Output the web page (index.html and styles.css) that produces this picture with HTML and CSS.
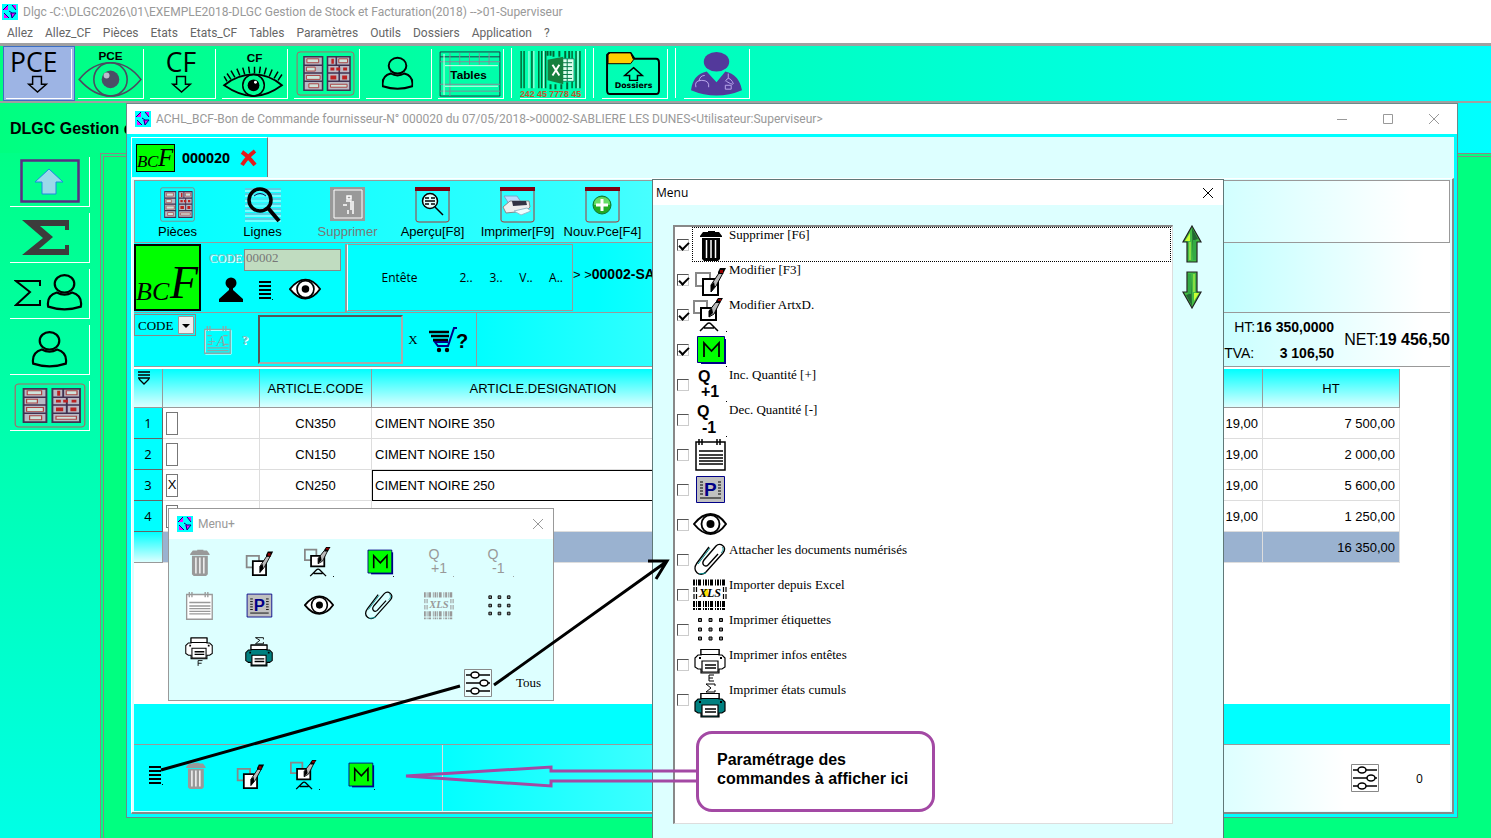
FILE: index.html
```html
<!DOCTYPE html>
<html lang="fr">
<head>
<meta charset="utf-8">
<title>Dlgc - Gestion de Stock et Facturation</title>
<link rel="stylesheet" href="styles.css">
</head>
<body>
<svg class="sprite" aria-hidden="true">
  <symbol id="logo" viewBox="0 0 16 16"><path fill="#0ff" d="M0 0h16v16H0z"/><path fill="#f0f" d="M2 6V5l4-4v5zM10 1h4v5zM2 10l5 4H2zM8 9h5l-3 5z"/><path d="M1 6l5-5M10 1l4 5M2 9l5 5M7 7l3 2h4M9 9l1 5 4-5" stroke="#008" fill="none"/></symbol>
  <symbol id="cabinet" viewBox="0 0 60 46" preserveAspectRatio="none"><rect x="1" y="1" width="58" height="44" rx="3" fill="none" stroke="#a66"/><path fill="#b9b9c4" d="M8 6h19v34H8zM32 6h23v34H32z"/><path d="M8 6h19v34H8zM32 6h23v34H32zM8 14.500h19M8 22.500h19M8 31h19M32 14.500h23M32 22.500h23M32 31h23M41 6v8M44 14v17" fill="none" stroke="#413050" stroke-width="1.600"/><path d="M11 8h12v4H11zM43.500 8h9v4h-9zM10.500 16.500h9v4h-9zM10.500 25h14v4h-14zM13 33.500h10v4H13zM35 34h17v3H35z" fill="#cfe3dc" stroke="#a44"/><path fill="#b22" d="M36 8h2.500v5H36zM35 17h4v3h-4zM41 17h4v3h-4zM48 17h4v3h-4zM35 25h6v4h-6zM47 25h5v4h-5z"/></symbol>
  <symbol id="user" viewBox="0 0 32 34"><ellipse cx="16" cy="9" rx="9" ry="8" fill="none" stroke="#000" stroke-width="2"/><path d="M9 17C2 19 0 24 1 30q15 5 30 0c1-6-1-11-8-13q-7 4-14 0z" fill="none" stroke="#000" stroke-width="2"/></symbol>
  <symbol id="sigma" viewBox="0 0 28 28"><path d="M26 7V2H2l14 11L2 26h24v-5" fill="none" stroke="#000" stroke-width="2"/></symbol>
  <symbol id="trash" viewBox="0 0 34 34"><path fill="currentColor" d="M15 3h7v1h4l3 4v1H7V8l3-4h5zM9 10h18v21l-2 2H11l-2-2z"/><path stroke="#fff" stroke-width="1.500" d="M13.500 12v18M18 12v18M22.500 12v18"/></symbol>
  <symbol id="edit" viewBox="0 0 34 34"><path d="M3 10h14v13H3z" fill="none" stroke="#888" stroke-width="2"/><path d="M10 16h15v16H10z" fill="#fff" stroke="#000" stroke-width="2"/><path d="M18 29V22l8-12h4l-7 13z" fill="#bbb" stroke="#000"/><path d="M18 29v-7l3-3 1 5z"/><path d="M25 9l2-4h6l-3 6h-5z"/><path fill="#900" d="M27 7h3v3h-3z"/></symbol>
  <symbol id="edita" viewBox="0 0 34 34"><path d="M1 3h13v12H1z" fill="none" stroke="#888" stroke-width="2"/><path d="M8 10h15v12H8z" fill="#fff" stroke="#000" stroke-width="2"/><path d="M16 19v-6l7-9h4l-6 12z" fill="#bbb" stroke="#000"/><path d="M16 19v-6l3-3 1 5z"/><path d="M23 3l2-3h5l-3 5h-4z"/><path fill="#900" d="M25 1h3v2h-3z"/><path d="M7 33l7-7q2-2 4 0l7 7M11 30h10" fill="none" stroke="#000" stroke-width="1.500"/><path d="M33 33h1v1h-1z"/></symbol>
  <symbol id="mark" viewBox="0 0 34 34"><path fill="#008" d="M8 6h25v25H8z"/><path fill="#0f0" stroke="#008" d="M4.500 3.500h27v26h-27z"/><path d="M11 24V10l7.500 8 7.500-8v14" fill="none" stroke="#000" stroke-width="1.800"/><path d="M33 33h1v1h-1z"/></symbol>
  <symbol id="qplus" viewBox="0 0 34 34"><text x="5" y="14" class="qtext">Q</text><text x="8" y="29" class="qtext">+1</text><path fill="currentColor" d="M33 33h1v1h-1z"/></symbol>
  <symbol id="qminus" viewBox="0 0 34 34"><text x="4" y="14" class="qtext">Q</text><text x="9" y="30" class="qtext">-1</text><path fill="currentColor" d="M33 33h1v1h-1z"/></symbol>
  <symbol id="notepad" viewBox="0 0 34 34"><path fill="#fff" stroke="currentColor" stroke-width="1.500" d="M3 4h29v28H3z"/><path d="M6 13h24M6 17h24M6 20h24M6 23h24M6 26h24M6 1v6M9 1v6M24 1v6M27 1v6" stroke="currentColor" stroke-width="1.500"/></symbol>
  <symbol id="pbox" viewBox="0 0 34 34"><path fill="#c0c0c0" stroke="#008" d="M3.500 3.500h28v26h-28z"/><path d="M7 9h3M7 12h3M7 15h3M7 18h3M7 21h3M25 9h3M25 12h3M25 15h3M25 18h3M25 21h3M7 25h21" stroke="#000"/><text x="11" y="23" font-family="Liberation Sans" font-weight="bold" font-size="19" fill="#008">P</text></symbol>
  <symbol id="eye" viewBox="0 0 34 34"><path d="M1 16Q9 6 17.500 6T33 16Q26 26 17.500 26T1 16z" fill="#fff" stroke="#000" stroke-width="2"/><circle cx="17.500" cy="16" r="9" fill="#fff" stroke="#000" stroke-width="1.800"/><circle cx="17.500" cy="16" r="4"/></symbol>
  <symbol id="clip" viewBox="0 0 34 34"><path d="M16 4L4 20c-6 8 3 15 9 9L30 10c5-6-3-11-7-7L11 17c-3 4 1 8 4 5l10-11" fill="none" stroke="#000" stroke-width="1.400"/><path d="M17 5L5 21M29 4c2 2 1 4-1 6M13 30L6 31" fill="none" stroke="#088"/></symbol>
  <symbol id="xls" viewBox="0 0 34 34"><path d="M0 4.500h34M0 26h34" stroke="currentColor" stroke-width="6" stroke-dasharray="2 1 1 1 3 2 1 1"/><path d="M0 31h34" stroke="currentColor" stroke-width="2" stroke-dasharray="2 1 1 1 3 2 1 1"/><path d="M1 9v5M1 16v5M3.500 9v5M3.500 16v5M30.500 9v5M30.500 16v5M33 9v5M33 16v5" stroke="currentColor" stroke-width="1.200"/><path class="gold" d="M11 11h4v7h-4z"/><text x="6" y="19" font-family="Liberation Serif" font-style="italic" font-weight="bold" font-size="12" fill="currentColor">XLS</text></symbol>
  <symbol id="dots" viewBox="0 0 34 34"><path fill="#888" stroke="#000" d="M5.500 5.500h3v3h-3zM16 5.500h3v3h-3zM26.500 5.500h3v3h-3zM5.500 15h3v3h-3zM16 15h3v3h-3zM26.500 15h3v3h-3zM5.500 24h3v3h-3zM16 24h3v3h-3zM26.500 24h3v3h-3z"/></symbol>
  <symbol id="printer" viewBox="0 0 34 34"><path class="printer-body" d="M8 7V1.500h18V7h3l3 3v9l-3 2h-3v4H8v-4H5l-3-2v-9l3-3z" stroke="#000" stroke-width="1.200"/><path d="M8 6.500V1.500h18v5zM9 24V13h16v11z" fill="#fff" stroke="#000" stroke-width="1.200"/><path d="M12 17h11M12 20h11" stroke="#000" stroke-width="1.500"/><path d="M6 9h2v2H6zM27 9h2v2h-2z"/></symbol>
  <symbol id="sliders" viewBox="0 0 28 28"><path fill="#fff" fill-opacity=".5" stroke="#888" d="M.5.500h27v27H.5z"/><path d="M2 6h24M2 14h24M2 22h24" stroke="#000" stroke-width="1.700"/><g fill="#fff" stroke="#000" stroke-width="1.500"><ellipse cx="11" cy="6" rx="4" ry="3"/><ellipse cx="20" cy="14" rx="4" ry="3"/><ellipse cx="11" cy="22" rx="4" ry="3"/></g></symbol>
  <symbol id="lines" viewBox="0 0 14 20"><path d="M0 2h12M0 6h12M0 10h12M0 14h12M0 18h12" stroke="#000" stroke-width="2"/><path d="M13 19h1v1h-1z"/></symbol>
  <symbol id="cross" viewBox="0 0 12 12"><path d="M1 1l10 10M11 1L1 11" fill="none" stroke="currentColor"/></symbol>
  <symbol id="arrow" viewBox="0 0 20 38"><path d="M10 1l9 16h-4v20H5V17H1z" fill="#4b4" stroke="#222" stroke-width="1.200"/><path d="M10 3l6 11-3 1v20h-2z" fill="#263"/><path d="M11 15h3v20h-3z" fill="#3a4"/><path d="M7 17h2v18H7z" fill="#8d4"/><path d="M3 16l5-8v8z" fill="#cf3"/></symbol>
</svg>

<div class="app">
  <header class="app-title"><svg class="logo"><use href="#logo"/></svg><span>Dlgc -C:\DLGC2026\01\EXEMPLE2018-DLGC Gestion de Stock et Facturation(2018) --&gt;01-Superviseur</span></header>
  <nav class="menubar">
    <a href="#">Allez</a><a href="#">Allez_CF</a><a href="#">Pièces</a><a href="#">Etats</a><a href="#">Etats_CF</a><a href="#">Tables</a><a href="#">Paramètres</a><a href="#">Outils</a><a href="#">Dossiers</a><a href="#">Application</a><a href="#">?</a>
  </nav>

  <div class="toolbar">
    <button class="tool tool-active" aria-label="PCE"><svg viewBox="0 0 66 50"><text x="4" y="23" class="big">PCE</text><path class="hollow" d="M27 28h9v8h5l-9 8-9-8h4z"/></svg></button>
    <button class="tool" aria-label="Voir PCE"><svg viewBox="0 0 66 50"><text x="33" y="11" text-anchor="middle" class="small">PCE</text><path d="M1 31Q15 14 33 14T64 31Q50 48 33 48T1 31z" fill="none" stroke="#4b4b60" stroke-width="1.600"/><circle cx="33" cy="31" r="17" fill="none" stroke="#4b4b60" stroke-width="1.600"/><circle cx="33" cy="31" r="9" fill="#4b4f66"/><circle cx="29" cy="27" r="3" fill="#bbc"/></svg></button>
    <button class="tool" aria-label="CF"><svg viewBox="0 0 66 50"><text x="16" y="23" class="big">CF</text><path class="hollow" d="M27 28h9v8h5l-9 8-9-8h4z"/></svg></button>
    <button class="tool" aria-label="Voir CF"><svg viewBox="0 0 66 50"><text x="33" y="13" text-anchor="middle" class="small">CF</text><path d="M2 37Q16 26 32 26T61 37Q46 48 32 48T2 37z" fill="none" stroke="#000" stroke-width="1.800"/><circle cx="32" cy="37" r="11" fill="none" stroke="#000" stroke-width="1.500"/><circle cx="32" cy="37" r="6"/><circle cx="34" cy="34" r="1.500" fill="#fff"/><path d="M5 33l-3-5M9 31l-4-6M13 29l-4-7M18 27l-3-7M23 26l-2-7M28 25l-1-7M33 25v-7M38 25l1-7M43 26l2-7M48 28l3-7M53 30l4-7M57 32l4-6" stroke="#000" stroke-width="1.500"/></svg></button>
    <button class="tool" aria-label="Pièces"><svg viewBox="0 0 66 50"><use href="#cabinet" x="2" y="2" width="60" height="46"/></svg></button>
    <button class="tool" aria-label="Tiers"><svg viewBox="0 0 66 50"><use href="#user" x="16" y="7" width="32" height="36"/></svg></button>
    <button class="tool" aria-label="Tables"><svg viewBox="0 0 66 50"><path d="M2 3h61v45H2zM2 8h61" fill="none" stroke="#234"/><path d="M2 13h61M2 36h61M2 43h61M12 4v44M22 4v12M32 4v12M42 4v12M52 4v12" stroke="#889"/><path d="M7 17h54M7 38h54M6 5v42" stroke="#dfe"/><text x="31" y="31" text-anchor="middle" class="small">Tables</text></svg></button>
    <span class="tool-sep"></span>
    <button class="tool" aria-label="Codes"><svg viewBox="0 0 66 50"><path d="M1 2v38M4 2v38M12 2v38M19 2v38M22 2v38M26 2v38M53 2v38M57 2v38M61 2v38" stroke="#063" stroke-width="1.500"/><path d="M9 2v38M14 2v38M24 2v38M59 2v38" stroke="#dfe"/><path d="M28 2v5M31 2v5M34 2v6M40 2v6M46 2v8M50 2v8M31 36v5M36 36v5M42 36v5M48 34v7" stroke="#063" stroke-width="2"/><path d="M42 10h13v23H42z" fill="#dfe" stroke="#096"/><path d="M43 14h10M43 18h10M43 22h10M43 26h10M43 30h10M48 10v23" stroke="#074"/><path fill="#16803f" d="M28 11l16-3v28l-16-4z"/><path d="M33 16l7 11M40 16l-7 11" stroke="#fff" stroke-width="2"/><text x="31" y="49" text-anchor="middle" class="digits">242 45 7778 45</text></svg></button>
    <span class="tool-sep"></span>
    <button class="tool" aria-label="Dossiers"><svg viewBox="0 0 66 50"><path d="M5 14V6l2-2h22l4 6h22q3 0 3 4v28q0 4-3 4H8q-3 0-3-4z" fill="none" stroke="#000" stroke-width="2"/><path d="M6 14V6l2-2h21l3 7-3 4H6z" fill="#fc0" stroke="#000"/><path class="hollow" d="M32 19l9 8h-5v5h-8v-5h-5z"/><text x="32" y="40" text-anchor="middle" class="tiny">Dossiers</text></svg></button>
    <span class="tool-sep"></span>
    <button class="tool" aria-label="Utilisateur"><svg viewBox="0 0 66 50"><ellipse cx="33" cy="13" rx="13" ry="10" fill="#53399b"/><path d="M7 42q2-16 16-19l10 11 9-11q14 3 17 19-26 11-52 0z" fill="#53399b"/><path d="M12 39q-2-7 6-7t7 7M15 33q1-6 6-6M45 25v5M42 33q3-6 7 0t-6 0M42 37h6v4h-6z" fill="none" stroke="#b9a8ec"/></svg></button>
  </div>

  <main class="desktop">
    <div class="desktop-band">DLGC Gestion de</div>
    <div class="desktop-row">
      <aside class="sidebar">
        <button class="side" aria-label="Remonter"><svg viewBox="0 0 72 45"><path d="M7.500 1.500h57v41h-57z" fill="none" stroke="#5b2c83" stroke-width="2.500"/><path d="M35 10l14 13h-7v12H28V23h-7z" fill="#9bd9ea" stroke="#1a8ae0"/></svg></button>
        <button class="side" aria-label="Cumuls"><svg viewBox="0 0 72 45"><path fill="#3c3c3c" d="M8 5h47v10h-4v-4H26l13 11-14 12h26v-4h4v10H8l21-17z"/></svg></button>
        <button class="side" aria-label="Cumuls tiers"><svg viewBox="0 0 72 45"><use href="#sigma" x="0" y="8" width="28" height="28"/><use href="#user" x="32" y="3" width="37" height="37"/></svg></button>
        <button class="side" aria-label="Tiers"><svg viewBox="0 0 72 45"><use href="#user" x="17" y="4" width="37" height="37"/></svg></button>
        <button class="side" aria-label="Pièces"><svg viewBox="0 0 72 45"><use href="#cabinet" width="72" height="45"/></svg></button>
      </aside>
      <div class="workspace"></div>
    </div>

    <section class="window order">
      <header class="window-title"><svg class="logo"><use href="#logo"/></svg><h1>ACHL_BCF-Bon de Commande fournisseur-N° 000020 du 07/05/2018-&gt;00002-SABLIERE LES DUNES&lt;Utilisateur:Superviseur&gt;</h1>
        <div class="window-buttons">
          <button aria-label="Réduire"><svg viewBox="0 0 12 12"><path d="M1 6.500h10" stroke="currentColor"/></svg></button>
          <button aria-label="Agrandir"><svg viewBox="0 0 12 12"><path d="M1.500 1.500h9v9h-9z" fill="none" stroke="currentColor"/></svg></button>
          <button aria-label="Fermer"><svg><use href="#cross"/></svg></button>
        </div>
      </header>
      <div class="order-body">
        <div class="tabs">
          <button class="tab"><svg class="bcf-small" viewBox="0 0 39 28"><rect x=".5" y=".5" width="38" height="27" fill="#0f0" stroke="#000"/><text x="1" y="23" class="bcf bcf-s">B</text><text x="11" y="23" class="bcf bcf-s">C</text><text x="22" y="22" class="bcf bcf-m">F</text></svg><span>000020</span><svg class="tab-x" viewBox="0 0 18 18"><path d="M2 3q6 4 13 13M15 2Q7 8 2 16" fill="none" stroke="#e21b1b" stroke-width="4"/></svg></button>
        </div>
        <div class="pane">
          <div class="actions">
            <button class="action"><svg viewBox="0 0 36 36"><use href="#cabinet" width="35" height="35"/></svg>Pièces</button>
            <button class="action"><svg viewBox="0 0 36 36"><path d="M0 2h36M0 7h36M0 12h36M0 17h36M0 22h36M0 27h36M0 32h36" stroke="#a39bc8"/><path d="M0 4h36M0 9h36M0 14h36M0 19h36M0 24h36M0 29h36M0 34h36" stroke="#dff"/><circle cx="15" cy="13" r="11" fill="#3ff" fill-opacity=".5" stroke="#000" stroke-width="3.500"/><path d="M9 9q6-5 12 0" fill="none" stroke="#115"/><path d="M23 21l11 13" stroke="#000" stroke-width="4"/></svg>Lignes</button>
            <button class="action" disabled><svg viewBox="0 0 36 36"><path fill="#999" d="M0 0h35v34H0z"/><path d="M4 3h28v28H4z" fill="none" stroke="#fff"/><path d="M17 9h4v3h-4zM16 14h5v9M18 23v4M23 23v4M23 14v9M13 18h4" fill="none" stroke="#fff" stroke-width="1.500"/></svg>Supprimer</button>
            <button class="action"><svg viewBox="0 0 36 36"><path d="M1 1h33v32q0 2-3 2H4q-3 0-3-2z" fill="none" stroke="#a33"/><path fill="#800010" d="M0 0h35v4H0z"/><circle cx="15" cy="14" r="7.500" fill="#dff" stroke="#000" stroke-width="1.500"/><path d="M10 11h4M16 11h4M10 14h10M10 17h4M16 17h4M20 20l8 8" stroke="#000" stroke-width="1.500"/></svg>Aperçu[F8]</button>
            <button class="action"><svg viewBox="0 0 36 36"><path d="M1 1h33v32q0 2-3 2H4q-3 0-3-2z" fill="none" stroke="#a33"/><path fill="#800010" d="M0 0h35v4H0z"/><path fill="#bdf" stroke="#7ac" d="M4 9h13l4 6-12 2z"/><path fill="#eee" stroke="#888" d="M3 20l7-6h19l1 6-4 4-20 2z"/><path fill="#334" d="M12 14h14l1 4-14 1z"/><path fill="#eff" stroke="#9bc" d="M14 24l13-3 4 3-10 4z"/></svg>Imprimer[F9]</button>
            <button class="action"><svg viewBox="0 0 36 36"><path d="M1 1h33v32q0 2-3 2H4q-3 0-3-2z" fill="none" stroke="#a33"/><path fill="#800010" d="M0 0h35v4H0z"/><circle cx="17" cy="18" r="9" fill="#2a2" stroke="#173"/><path d="M9 18q0-8 8-8t8 8z" fill="#6d6"/><path d="M17 12v12M11 18h12" stroke="#fff" stroke-width="3"/></svg>Nouv.Pce[F4]</button>
          </div>

          <div class="client">
            <svg class="bcf-big" viewBox="0 0 67 67"><rect x="1" y="1" width="65" height="65" fill="#0f0" stroke="#000" stroke-width="2"/><text x="2" y="56" class="bcf">B</text><text x="18" y="56" class="bcf">C</text><text x="36" y="54" class="bcf bcf-l">F</text></svg>
            <div class="client-code">
              <div class="code-line"><label for="code">CODE:</label><input id="code" value="00002" disabled></div>
              <div class="code-icons"><svg width="24" height="26" viewBox="0 0 24 26"><circle cx="12" cy="6" r="5.500"/><path d="M10 10h4v3l10 9v3H0v-3l10-9z"/></svg><svg width="14" height="20"><use href="#lines"/></svg><svg width="32" height="32"><use href="#eye"/></svg></div>
            </div>
            <div class="client-tabs"><button class="wide">Entête</button><button>2..</button><button>3..</button><button>V..</button><button>A..</button></div>
            <div class="client-name">&gt; &gt;<b>00002-SABLIERE</b></div>
          </div>

          <div class="search">
            <div class="picker"><select aria-label="Critère"><option>CODE</option></select><svg viewBox="0 0 16 18"><path fill="#eee" stroke="#999" d="M.5.500h15v17H.5z"/><path d="M4 8h8l-4 4z"/></svg></div>
            <svg class="note" viewBox="0 0 34 34"><path fill="none" stroke="#fff" d="M4 6h29v27H4z"/><path fill="none" stroke="currentColor" stroke-width="1.500" d="M3 5h29v27H3zM6 1v6M9 1v6M24 1v6M27 1v6M6 12h5M24 12h5M6 26h24M6 29h24M6 22h5M25 22h5"/><text x="6" y="24" font-family="Liberation Serif" font-style="italic" font-size="16" fill="currentColor">+A</text></svg>
            <span class="hint">?</span>
            <input class="query" aria-label="Recherche">
            <button class="clear">X</button>
            <button class="cart" aria-label="Panier"><svg viewBox="0 0 40 28"><path d="M0 6h20M2 10h18M4 14h15" fill="none" stroke="#000" stroke-width="2.500"/><path d="M28 2h-3l-6 18H9l-3-4h13" fill="none" stroke="#008" stroke-width="2"/><circle cx="10" cy="24" r="2.200"/><circle cx="18" cy="24" r="2.200"/><text x="27" y="22" font-family="Liberation Sans" font-weight="bold" font-size="20">?</text></svg></button>
            <div class="totals">
              <dl class="sub"><dt class="ht">HT:</dt><dd>16 350,0000</dd><dt>TVA:</dt><dd>3 106,50</dd></dl>
              <div class="net">NET:<b>19 456,50</b></div>
            </div>
          </div>

          <div class="grid-area">
            <table class="lines">
              <colgroup><col class="c-num"><col class="c-sel"><col class="c-code"><col class="c-name"><col><col class="c-tva"><col class="c-ht"></colgroup>
              <thead><tr><th class="corner"><svg viewBox="0 0 12 14"><path d="M0 1h12M0 4h12M0 7h12M1 8l5 5 5-5" fill="none" stroke="#000" stroke-width="1.300"/></svg></th><th></th><th>ARTICLE.CODE</th><th>ARTICLE.DESIGNATION</th><th></th><th></th><th>HT</th></tr></thead>
              <tbody>
                <tr><th>1</th><td><input type="checkbox" class="pick" aria-label="Ligne 1"></td><td class="mid">CN350</td><td>CIMENT NOIRE 350</td><td></td><td class="num">19,00</td><td class="num">7 500,00</td></tr>
                <tr><th>2</th><td><input type="checkbox" class="pick" aria-label="Ligne 2"></td><td class="mid">CN150</td><td>CIMENT NOIRE 150</td><td></td><td class="num">19,00</td><td class="num">2 000,00</td></tr>
                <tr><th>3</th><td><input type="checkbox" class="pick" aria-label="Ligne 3" checked></td><td class="mid">CN250</td><td class="current">CIMENT NOIRE 250</td><td></td><td class="num">19,00</td><td class="num">5 600,00</td></tr>
                <tr><th>4</th><td><input type="checkbox" class="pick" aria-label="Ligne 4"></td><td></td><td></td><td></td><td class="num">19,00</td><td class="num">1 250,00</td></tr>
              </tbody>
              <tfoot><tr><th></th><td></td><td></td><td></td><td></td><td></td><td class="num">16 350,00</td></tr></tfoot>
            </table>
          </div>
          <div class="strip"></div>
          <footer class="commands">
            <div class="command-list">
              <button aria-label="Menu+"><svg class="lines-icon"><use href="#lines"/></svg></button>
              <button aria-label="Supprimer" disabled><svg><use href="#trash"/></svg></button>
              <button aria-label="Modifier"><svg><use href="#edit"/></svg></button>
              <button aria-label="Modifier ArtxD."><svg><use href="#edita"/></svg></button>
              <button aria-label="M"><svg><use href="#mark"/></svg></button>
            </div>
            <button class="settings" aria-label="Paramétrage"><svg><use href="#sliders"/></svg></button>
            <span class="count">0</span>
          </footer>
        </div>
      </div>
    </section>

    <section class="window extra">
      <header class="window-title"><svg class="logo"><use href="#logo"/></svg><h2>Menu+</h2><button class="close" aria-label="Fermer"><svg><use href="#cross"/></svg></button></header>
      <div class="extra-grid">
        <button aria-label="Supprimer" disabled><svg><use href="#trash"/></svg></button>
        <button aria-label="Modifier"><svg><use href="#edit"/></svg></button>
        <button aria-label="Modifier ArtxD."><svg><use href="#edita"/></svg></button>
        <button aria-label="M"><svg><use href="#mark"/></svg></button>
        <button aria-label="Inc. Quantité" disabled><svg><use href="#qplus"/></svg></button>
        <button aria-label="Dec. Quantité" disabled><svg><use href="#qminus"/></svg></button>
        <button aria-label="Notes" disabled><svg><use href="#notepad"/></svg></button>
        <button aria-label="P"><svg><use href="#pbox"/></svg></button>
        <button aria-label="Voir"><svg><use href="#eye"/></svg></button>
        <button aria-label="Attacher"><svg><use href="#clip"/></svg></button>
        <button aria-label="Importer" disabled><svg><use href="#xls"/></svg></button>
        <button aria-label="Etiquettes"><svg><use href="#dots"/></svg></button>
        <button aria-label="Infos entêtes"><svg viewBox="0 0 34 34"><use href="#printer" y="2" width="34" height="34"/><path d="M21 29h-5v6M16 32h4" fill="none" stroke="#000"/></svg></button>
        <button aria-label="Etats cumuls" class="teal"><svg viewBox="0 0 34 34"><path d="M22 5V3h-9l5 3-5 4h9V8" fill="none" stroke="#000"/><use href="#printer" y="10" width="34" height="34"/></svg></button>
      </div>
      <div class="extra-foot"><button aria-label="Paramétrage"><svg><use href="#sliders"/></svg></button><span>Tous</span></div>
    </section>

    <section class="window menu">
      <header class="window-title"><h2>Menu</h2><button class="close" aria-label="Fermer"><svg><use href="#cross"/></svg></button></header>
      <div class="menu-body">
        <ul class="menu-list">
          <li><label class="focused"><input type="checkbox" checked><span><svg><use href="#trash"/></svg>Supprimer [F6]</span></label></li>
          <li><label><input type="checkbox" checked><span><svg><use href="#edit"/></svg>Modifier [F3]</span></label></li>
          <li><label><input type="checkbox" checked><span><svg><use href="#edita"/></svg>Modifier ArtxD.</span></label></li>
          <li><label><input type="checkbox" checked aria-label="M"><span><svg><use href="#mark"/></svg></span></label></li>
          <li><label><input type="checkbox"><span><svg><use href="#qplus"/></svg>Inc. Quantité [+]</span></label></li>
          <li><label><input type="checkbox"><span><svg><use href="#qminus"/></svg>Dec. Quantité [-]</span></label></li>
          <li><label><input type="checkbox" aria-label="Notes"><span><svg><use href="#notepad"/></svg></span></label></li>
          <li><label><input type="checkbox" aria-label="P"><span><svg><use href="#pbox"/></svg></span></label></li>
          <li><label><input type="checkbox" aria-label="Voir"><span><svg><use href="#eye"/></svg></span></label></li>
          <li><label><input type="checkbox"><span><svg><use href="#clip"/></svg>Attacher les documents numérisés</span></label></li>
          <li><label><input type="checkbox"><span><svg><use href="#xls"/></svg>Importer depuis Excel</span></label></li>
          <li><label><input type="checkbox"><span><svg><use href="#dots"/></svg>Imprimer étiquettes</span></label></li>
          <li><label><input type="checkbox"><span><svg viewBox="0 0 34 34"><use href="#printer" width="34" height="34"/><path d="M21 27h-5v6h5M16 30h4" fill="none" stroke="#000"/></svg>Imprimer infos entêtes</span></label></li>
          <li><label><input type="checkbox"><span class="teal"><svg viewBox="0 0 34 34"><path d="M22 3V1h-9l5 4-5 4h9V7" fill="none" stroke="#000"/><use href="#printer" y="9" width="34" height="34"/></svg>Imprimer états cumuls</span></label></li>
        </ul>
        <div class="movers"><button aria-label="Monter"><svg><use href="#arrow"/></svg></button><button aria-label="Descendre" class="down"><svg><use href="#arrow"/></svg></button></div>
      </div>
    </section>

    <svg class="pointers" width="720" height="735" viewBox="0 103 720 735" aria-hidden="true">
      <path d="M161 770L460 686M494 685L666 562M648 561l19 0-11 18" fill="none" stroke="#000" stroke-width="3"/>
      <path d="M698 771H551v-4L406 776l145 10v-5h147" fill="none" stroke="#a349a4" stroke-width="3"/>
    </svg>
    <p class="callout">Paramétrage des commandes à afficher ici</p>
  </main>
</div>
</body>
</html>
```
FILE: styles.css
```css
* { box-sizing: border-box; }
html, body { height: 100%; }
body { margin: 0; font-family: "Liberation Sans", Arial, sans-serif; font-size: 13px; color: #000; overflow: hidden; }
button, input, select { font: inherit; color: inherit; margin: 0; }
button { padding: 0; border: 0; background: none; }
h1, h2, p, ul, dl, dd { margin: 0; padding: 0; font-size: inherit; font-weight: normal; }
ul { list-style: none; }
svg { display: block; overflow: visible; }
.sprite { display: none; }
.logo { width: 16px; height: 16px; flex: none; }
.gold { fill: var(--gold, #fd0); }
.qtext { font-family: "Liberation Sans", sans-serif; font-size: 16px; font-weight: var(--q-weight, bold); fill: currentColor; }
.printer-body { fill: var(--body, #fff); }
.teal { --body: #008080; }
button:disabled { color: #999; --gold: transparent; --q-weight: normal; }

.app { display: flex; flex-direction: column; height: 100%; }
.app-title { display: flex; align-items: center; gap: 5px; height: 24px; padding: 0 2px; color: #999; background: #fff; font: 12px/24px Roboto, sans-serif; white-space: nowrap; }
.menubar { display: flex; gap: 12px; height: 19px; padding: 0 7px; background: #fff; font: 12px/18px Roboto, sans-serif; }
.menubar a { color: #666; text-decoration: none; }

.toolbar { display: flex; flex: none; height: 60px; padding: 0 3px; border-top: 3px solid #a0a0a0; border-bottom: 2px solid #a0a0a0; background: linear-gradient(90deg, #00ff80, #00ffff); }
.tool { width: 72px; height: 55px; padding: 2px 3px; border: 0; }
.tool svg { width: 66px; height: 50px; border-right: 1px solid #fff; border-bottom: 1px solid #fff; }
.tool-active { background: #9db4e4; border: 1px solid #3c6fc4; padding: 1px 2px; }
.tool-sep { width: 10px; background: linear-gradient(#fff, #fff) 4px 2px / 1px 50px no-repeat; }
.big { font: 27px "Open Sans", sans-serif; }
.small { font: bold 12px "Liberation Sans", sans-serif; }
.tiny { font: bold 8px "DejaVu Sans", sans-serif; }
.digits { font: bold 9px "Liberation Sans", sans-serif; fill: #c0562e; }
.hollow { fill: none; stroke: #000; stroke-width: 1.5; }

.desktop { position: relative; flex: 1; display: flex; flex-direction: column; overflow: hidden; background: linear-gradient(#00ff80, #00ffe6); }
.desktop-band { flex: none; height: 50px; padding-left: 10px; background: linear-gradient(90deg, #00ff80, #00ffff); font-size: 16px; font-weight: bold; line-height: 52px; }
.desktop-row { display: flex; flex: 1; }
.sidebar { display: flex; flex-direction: column; gap: 6px; width: 100px; padding: 4px 0 0 10px; }
.side { display: flex; align-items: center; justify-content: center; width: 80px; height: 50px; border-right: 1px solid #fff; border-bottom: 1px solid #fff; }
.side svg { width: 72px; height: 45px; }
.workspace { flex: 1; border: 4px double #888; border-width: 4px 0 0 4px; background: #00ff80; }

.window { position: absolute; display: flex; flex-direction: column; border: 1px solid #6b8a8a; background: #ddffff; }
.window-title { display: flex; align-items: center; flex: none; background: #fff; color: #999; font: 12px/16px Roboto, sans-serif; }
.window-title svg:not(.logo) { width: 12px; height: 12px; }
.close { margin-left: auto; padding: 4px; }

.order { top: 0; right: 33px; bottom: 20px; left: 126px; }
.order > .window-title { height: 30px; padding: 0 17px 0 8px; gap: 5px; white-space: nowrap; }
.window-buttons { display: flex; gap: 34px; margin-left: auto; }
.order-body { flex: 1; display: flex; flex-direction: column; min-height: 0; padding: 3px 3px 3px 4px; background: #00ffff; }
.tabs { flex: none; height: 41px; background: #ddffff; }
.tab { display: flex; align-items: center; gap: 7px; width: 137px; height: 40px; padding-left: 4px; background: #00ffff; border: 1px solid #fff; border-right-color: #777; border-bottom: 0; font: bold 14px "Open Sans", sans-serif; }
.bcf-small { flex: none; width: 39px; height: 28px; }
.tab-x { flex: none; width: 18px; height: 18px; margin-left: 3px; }
.bcf { font: italic 26px "Liberation Serif", serif; }
.bcf-s { font-size: 17px; }
.bcf-m { font-size: 25px; }
.bcf-l { font-size: 46px; }

.pane { flex: 1; display: flex; flex-direction: column; min-height: 0; padding: 1px 2px; background: #ddffff; border: 1px solid #fff; border-right: 2px solid #888; border-bottom: 2px solid #888; }
.actions { flex: none; display: flex; height: 63px; padding-top: 6px; border: 1px solid #999; background: linear-gradient(90deg, #00ffff, #33ffff 33%, #ffffff 97%); }
.action { display: flex; flex-direction: column; align-items: center; gap: 1px; flex: none; width: 85px; line-height: 16px; white-space: nowrap; }
.action svg { width: 36px; height: 36px; }
.action:disabled { color: #777; }

.client { flex: none; display: flex; height: 70px; padding-top: 1px; border-bottom: 1px solid #999; background: linear-gradient(90deg, #00ffff 35%, #ffffff 98%); }
.bcf-big { flex: none; width: 67px; height: 67px; }
.client-code { flex: none; width: 146px; padding: 5px 5px 0 8px; border-right: 2px solid #999; font-family: "Liberation Serif", serif; }
.code-line { display: flex; }
.code-line label { flex: none; width: 35px; line-height: 18px; font-size: 12px; color: #7fbcbc; text-shadow: 1px 1px #fff; white-space: nowrap; }
.code-line input { width: 97px; height: 22px; padding: 0 1px 4px; border: 1px solid #888; background: #c0dcc0; color: #777; }
.code-icons { display: flex; align-items: center; gap: 16px; height: 38px; padding-left: 10px; }
.client-tabs { flex: none; display: flex; align-items: center; width: 226px; height: 67px; border: 1px solid #999; border-left-color: #fff; font: 12px "Open Sans", sans-serif; }
.client-tabs button { width: 30px; height: 30px; }
.client-tabs .wide { width: 103px; }
.client-name { line-height: 60px; white-space: nowrap; }
.client-name b { font-size: 14px; }

.search { flex: none; display: flex; align-items: center; height: 54px; border-bottom: 1px solid #999; background: linear-gradient(90deg, #00ffff 26%, #ffffff 98%); font-family: "Liberation Serif", serif; }
.picker { align-self: flex-start; display: flex; align-items: center; width: 62px; height: 22px; margin-top: 1px; padding: 1px; border: 1px solid #888; }
.picker select { flex: 1; min-width: 0; padding: 0 2px; border: 0; background: none; appearance: none; }
.picker svg { width: 16px; height: 18px; }
.note { width: 30px; height: 30px; margin-left: 6px; color: #8aa8a8; }
.hint { width: 26px; text-align: center; color: #7fbcbc; text-shadow: 1px 1px #fff; font-weight: bold; }
.query { width: 145px; height: 49px; border: 2px inset #aaa; background: #00ffff; }
.clear { width: 20px; }
.cart { width: 54px; height: 53px; border-right: 1px solid #999; }
.cart svg { width: 40px; height: 28px; margin-left: 6px; }
.totals { display: flex; align-items: center; gap: 10px; margin-left: auto; font-family: "Liberation Sans", sans-serif; white-space: nowrap; }
.sub { display: grid; grid-template-columns: 31px 79px; row-gap: 10px; font-size: 14px; line-height: 16px; text-align: right; }
.sub dd { font-weight: bold; }
.sub dt { text-align: left; }
.sub .ht { text-align: right; }
.net { font-size: 16px; }

.grid-area { flex: 1; min-height: 0; padding: 2px 50px 0 0; background: #fff; overflow: hidden; }
.lines { width: 100%; table-layout: fixed; border-collapse: separate; border-spacing: 0; }
.c-num { width: 29px; }
.c-sel { width: 97px; }
.c-code { width: 112px; }
.c-name { width: 343px; }
.c-tva { width: 100px; }
.c-ht { width: 137px; }
.lines th, .lines td { height: 31px; padding: 0 3px; font-weight: normal; border-right: 1px solid #ddd; border-bottom: 1px solid #ddd; overflow: hidden; white-space: nowrap; }
.lines thead th { height: 39px; background: linear-gradient(#00ffff, #ddffff); border-color: #999; }
.lines th.corner { vertical-align: top; }
.corner svg { width: 12px; height: 14px; margin: 2px 0 0 1px; }
.lines tbody th { background: #00ffff; border-color: #666; font: 13px "Open Sans", sans-serif; text-align: center; }
.lines tfoot th { background: linear-gradient(#00ffff, #ddffff); border-color: #999; }
.lines tfoot td { background: #9ab2d0; }
.lines .mid { text-align: center; }
.lines .num { text-align: right; padding-right: 4px; }
.lines td.current { padding-left: 2px; border: 1px solid #000; border-right: 0; }
.pick { display: block; appearance: none; width: 12px; height: 23px; border: 1px solid #777; background: #fff; font: 13px/20px "Liberation Sans", sans-serif; text-align: center; }
.pick:checked::before { content: "X"; display: block; margin: 0 -2px; }

.strip { flex: none; height: 41px; background: #00ffff; border-bottom: 1px solid #999; }
.commands { flex: none; display: flex; align-items: center; height: 66px; background: linear-gradient(90deg, #00ffff 23%, #ffffff 92%); }
.command-list { display: flex; align-items: center; width: 309px; height: 66px; padding: 0 0 7px 15px; border-right: 1px solid #ddd; }
.command-list button { width: 55px; }
.command-list button:first-child { width: 31px; }
.command-list svg { width: 30px; height: 30px; }
.command-list svg.lines-icon { width: 14px; height: 20px; }
.settings { margin-left: auto; }
.settings svg { width: 28px; height: 28px; }
.count { width: 71px; padding-left: 37px; font-family: "Open Sans", sans-serif; font-size: 12px; }

.extra { top: 405px; left: 168px; width: 386px; height: 193px; border-color: #999; }
.extra .window-title { height: 30px; padding: 0 5px 0 8px; gap: 5px; }
.extra-grid { display: grid; grid-template-columns: repeat(6, 60px); grid-auto-rows: 44px; padding-top: 1px; }
.extra-grid button { display: flex; align-items: center; justify-content: center; }
.extra-grid svg { width: 30px; height: 30px; }
.extra-foot { display: flex; align-items: center; justify-content: flex-end; gap: 24px; height: 28px; margin-top: -3px; padding-right: 12px; font: 13px "Liberation Serif", serif; }
.extra-foot svg { width: 28px; height: 28px; }

.menu { top: 76px; bottom: -1px; left: 652px; width: 572px; border-color: #607878; }
.menu .window-title { height: 25px; padding: 0 5px 0 3px; color: #000; font-family: "Open Sans", sans-serif; }
.menu-body { flex: 1; display: flex; align-items: stretch; padding: 20px 22px 14px 20px; }
.menu-list { flex: 1; padding: 0 1px; border: 1px solid #ddd; border-top: 2px solid #888; border-left: 2px solid #888; background: #fff; }
.menu-list label { display: flex; align-items: center; gap: 3px; height: 35px; padding-left: 1px; }
.menu-list label > span { flex: 1; display: flex; gap: 2px; height: 35px; font: 13px/13px "Liberation Serif", serif; border: 1px solid transparent; }
.menu-list label.focused > span { border: 1px dotted #000; }
.menu-list svg { width: 34px; height: 34px; }
.menu-list input { flex: none; appearance: none; width: 12px; height: 12px; border: 1px solid #555; border-right-color: #ccc; border-bottom-color: #ccc; background: #fff; }
.menu-list input:checked::before { content: ""; display: block; width: 8px; height: 4px; margin: 2px 1px; border: solid #000; border-width: 0 0 2px 2px; transform: rotate(-45deg); }
.movers { flex: none; display: flex; flex-direction: column; gap: 8px; width: 19px; margin-left: 9px; }
.movers svg { width: 20px; height: 38px; }
.down svg { transform: rotate(180deg); }

.pointers { position: absolute; top: 0; left: 0; pointer-events: none; }
.callout { position: absolute; top: 628px; left: 696px; width: 239px; height: 81px; padding: 16px 18px; border: 3px solid #a349a4; border-radius: 16px; font-size: 16px; font-weight: bold; line-height: 19px; }
```
